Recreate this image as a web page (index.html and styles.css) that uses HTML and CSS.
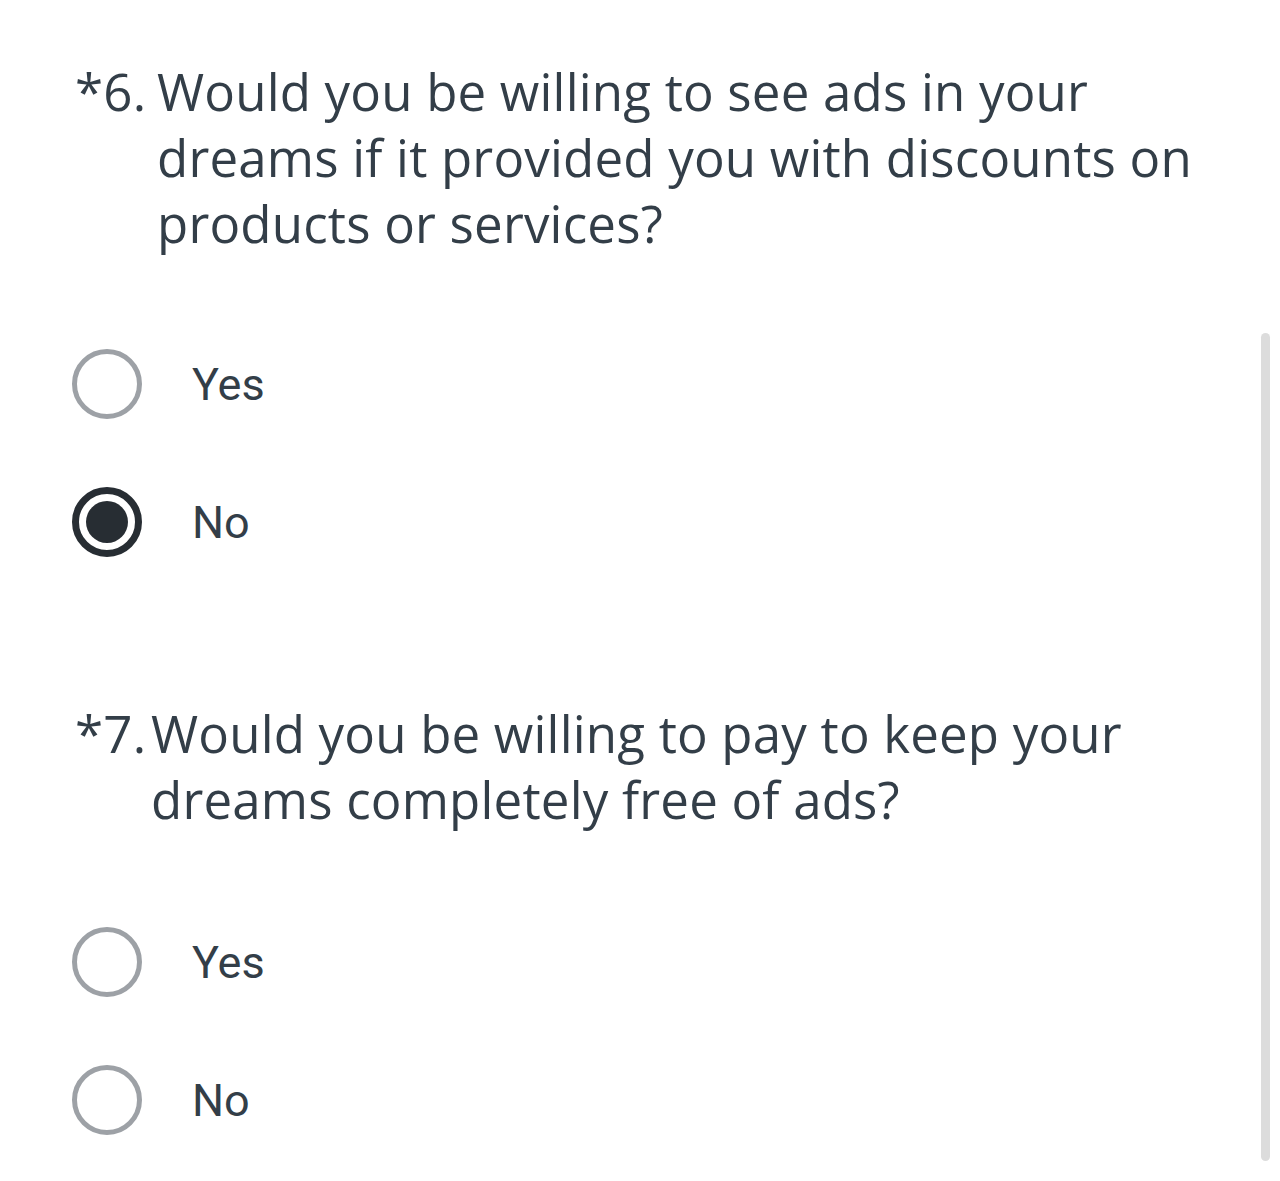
FILE: index.html
```html
<!DOCTYPE html>
<html lang="en">
<head>
    <meta charset="UTF-8">
    <meta name="viewport" content="width=device-width, initial-scale=1.0">
    <title>Survey</title>
    <link rel="stylesheet" href="styles.css">
</head>
<body>
    <div class="survey">
        <div class="question q6">
            <h2 class="question-title">
                <span class="question-number">*6.</span>
                <span class="question-text">Would you be willing to see ads in your dreams if it provided you with discounts on products or services?</span>
            </h2>
            <div class="options">
                <label class="option">
                    <span class="radio"></span>
                    <span class="option-label">Yes</span>
                </label>
                <label class="option">
                    <span class="radio checked"></span>
                    <span class="option-label">No</span>
                </label>
            </div>
        </div>

        <div class="question q7">
            <h2 class="question-title">
                <span class="question-number">*7.</span>
                <span class="question-text">Would you be willing to pay to keep your dreams completely free of ads?</span>
            </h2>
            <div class="options">
                <label class="option">
                    <span class="radio"></span>
                    <span class="option-label">Yes</span>
                </label>
                <label class="option">
                    <span class="radio"></span>
                    <span class="option-label">No</span>
                </label>
            </div>
        </div>
    </div>
    <div class="scrollbar"></div>
</body>
</html>
```

FILE: styles.css
```css
body {
    margin: 0;
    background-color: #ffffff;
    font-family: "Open Sans", Arial, sans-serif;
    color: #333e48;
}

.survey {
    padding: 58px 70px 0 75px;
}

.question-title {
    display: flex;
    margin: 0;
    font-size: 51px;
    font-weight: 400;
    line-height: 66px;
    letter-spacing: 0.2px;
    color: #333e48;
}

.question-number {
    flex: 0 0 82px;
}

.q7 .question-number {
    flex-basis: 76px;
}

.options {
    display: flex;
    flex-direction: column;
    margin-top: 59px;
}

.q7 .options {
    margin-top: 61px;
}

.q7 {
    margin-top: 109px;
}

.option {
    display: flex;
    align-items: center;
    height: 138px;
}

.radio {
    box-sizing: border-box;
    width: 70px;
    height: 70px;
    margin-left: -3px;
    border: 5px solid #9da1a6;
    border-radius: 50%;
    display: flex;
    align-items: center;
    justify-content: center;
}

.radio.checked {
    border: 7px solid #272d33;
}

.radio.checked::after {
    content: "";
    width: 42px;
    height: 42px;
    border-radius: 50%;
    background-color: #272d33;
}

.option-label {
    margin-left: 50px;
    font-family: Roboto, Arial, sans-serif;
    font-size: 45px;
    color: #333e48;
}

.scrollbar {
    position: absolute;
    top: 333px;
    right: 10px;
    width: 9px;
    height: 828px;
    border-radius: 5px;
    background-color: #dcdcdc;
}
```
